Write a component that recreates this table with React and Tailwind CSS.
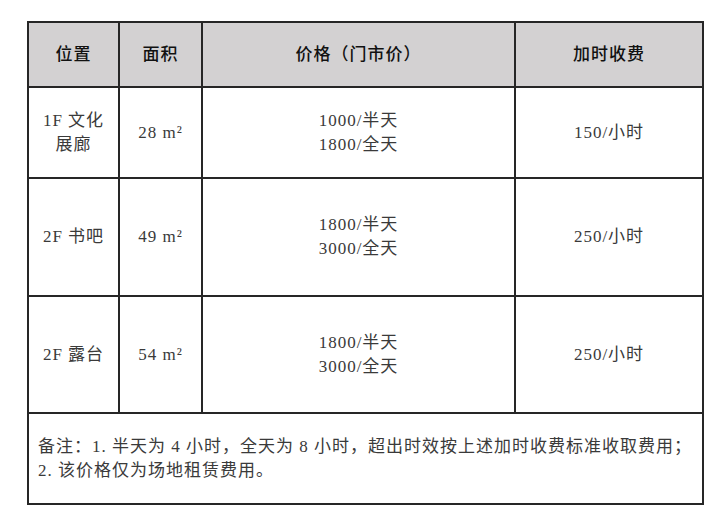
const rows = [
  { place: ['1F 文化', '展廊'], area: '28 m²', price: ['1000/半天', '1800/全天'], extra: '150/小时', h: 'h-[91px]' },
  { place: ['2F 书吧'], area: '49 m²', price: ['1800/半天', '3000/全天'], extra: '250/小时', h: 'h-[118px]' },
  { place: ['2F 露台'], area: '54 m²', price: ['1800/半天', '3000/全天'], extra: '250/小时', h: 'h-[117px]' },
];

const cell = 'border-2 border-[#262626] text-center align-middle';

export default function App() {
  return (
    <div className="min-h-[529px] w-[720px] bg-white pl-[27px] pt-[21px] font-['Liberation_Serif','Noto_Sans_CJK_SC',serif] text-[17px] leading-[24px] tracking-[1px] text-[#3a3a3a]">
      <table className="w-[675px] table-fixed border-collapse border-2 border-[#444]">
        <colgroup>
          <col className="w-[91px]" />
          <col className="w-[83px]" />
          <col className="w-[313px]" />
          <col className="w-[188px]" />
        </colgroup>
        <thead>
          <tr className="h-[65px] bg-[#d3d1d2] text-[#111] font-medium">
            <th className={cell + ' font-medium'}>位置</th>
            <th className={cell + ' font-medium'}>面积</th>
            <th className={cell + ' font-medium'}>价格（门市价）</th>
            <th className={cell + ' font-medium'}>加时收费</th>
          </tr>
        </thead>
        <tbody>
          {rows.map((r) => (
            <tr key={r.area} className={r.h}>
              <td className={cell}>
                {r.place.map((p) => (
                  <div key={p}>{p}</div>
                ))}
              </td>
              <td className={cell}>{r.area}</td>
              <td className={cell}>
                {r.price.map((p) => (
                  <div key={p}>{p}</div>
                ))}
              </td>
              <td className={cell}>{r.extra}</td>
            </tr>
          ))}
          <tr className="h-[91px]">
            <td colSpan={4} className="border-2 border-[#262626] px-[9px] text-left align-middle">
              <p>备注：1. 半天为 4 小时，全天为 8 小时，超出时效按上述加时收费标准收取费用；</p>
              <p>2. 该价格仅为场地租赁费用。</p>
            </td>
          </tr>
        </tbody>
      </table>
    </div>
  );
}
